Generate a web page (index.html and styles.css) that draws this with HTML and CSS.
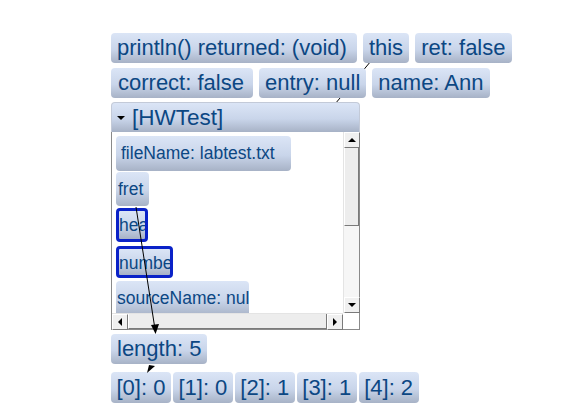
FILE: index.html
```html
<!DOCTYPE html>
<html>
<head>
<meta charset="utf-8">
<link rel="stylesheet" href="styles.css">
</head>
<body>
<div class="stage">
  <svg class="links-under" width="569" height="405" viewBox="0 0 569 405">
    <line x1="371" y1="61" x2="335" y2="104" stroke="#000" stroke-width="1"/>
  </svg>
  <div class="row r1">
    <div class="box b-println">println() returned: (void)</div>
    <div class="box">this</div>
    <div class="box">ret: false</div>
  </div>
  <div class="row r2">
    <div class="box b-correct">correct: false</div>
    <div class="box">entry: null</div>
    <div class="box">name: Ann</div>
  </div>
  <div class="frame">
    <div class="frame-head"><span class="tri"></span>[HWTest]</div>
    <div class="frame-body">
      <div class="content">
        <div class="item w-file">fileName: labtest.txt</div>
        <div class="item w-fret">fret</div>
        <div class="item sel w-hea">hea</div>
        <div class="item sel w-num">numbe</div>
        <div class="item w-src">sourceName: nul</div>
      </div>
      <div class="vscroll">
        <div class="btn up"><span class="arr-up"></span></div>
        <div class="thumb-v"></div>
        <div class="track"></div>
        <div class="btn down"><span class="arr-down"></span></div>
      </div>
      <div class="hscroll">
        <div class="btn left"><span class="arr-left"></span></div>
        <div class="thumb-h"></div>
        <div class="btn right"><span class="arr-right"></span></div>
      </div>
      <div class="corner"></div>
    </div>
  </div>
  <div class="row r-len">
    <div class="box">length: 5</div>
  </div>
  <div class="row r-arr">
    <div class="box">[0]: 0</div>
    <div class="box">[1]: 0</div>
    <div class="box">[2]: 1</div>
    <div class="box">[3]: 1</div>
    <div class="box">[4]: 2</div>
  </div>
  <svg class="links-over" width="569" height="405" viewBox="0 0 569 405">
    <line x1="136" y1="207" x2="154.5" y2="326" stroke="#000" stroke-width="1"/>
    <polygon points="155.6,334 151,325 159,324" fill="#000"/>
    <polygon points="147,373 149,365 155,366" fill="#000"/>
  </svg>
</div>
</body>
</html>
```
FILE: styles.css
```css
html, body {
  margin: 0;
  padding: 0;
  background: #ffffff;
}
.stage {
  position: relative;
  width: 569px;
  height: 405px;
  overflow: hidden;
  padding: 33px 0 0 111px;
  box-sizing: border-box;
  font-family: "Liberation Sans", Arial, sans-serif;
  color: #0c4783;
}
.links-under {
  position: absolute;
  left: 0;
  top: 0;
  z-index: 0;
}
.links-over {
  position: absolute;
  left: 0;
  top: 0;
  z-index: 5;
}
.row {
  position: relative;
  z-index: 1;
  display: flex;
}
.r1 { gap: 6px; }
.r2 { gap: 6px; margin-top: 5px; }
.r-len { margin-top: 4px; }
.r-arr { gap: 2px; margin-top: 8px; }
.box {
  height: 30px;
  line-height: 30px;
  padding: 0 6px;
  font-size: 22px;
  border-radius: 4px;
  background: linear-gradient(#dbe5f6, #c9d5ea 55%, #a7b2c6);
  white-space: nowrap;
}
.b-println { padding-right: 10px; }
.b-correct { padding: 0 9px 0 7px; }
.r-arr .box { height: 31px; line-height: 31px; padding: 0 5.5px; }
.frame {
  position: relative;
  z-index: 1;
  width: 249px;
  margin-top: 4px;
}
.frame-head {
  height: 29px;
  line-height: 29px;
  font-size: 22.5px;
  border-radius: 4px 4px 0 0;
  border: 1px solid #c3cad8;
  border-bottom: none;
  background: linear-gradient(#dbe5f6, #c9d5ea 55%, #a7b2c6);
  display: flex;
  align-items: center;
  padding-left: 5px;
}
.tri {
  width: 0;
  height: 0;
  border-left: 4px solid transparent;
  border-right: 4px solid transparent;
  border-top: 4px solid #000;
  margin-right: 7px;
  margin-top: 1px;
}
.frame-body {
  height: 197px;
  border: 1px solid #8a8a8a;
  border-top: none;
  background: #ffffff;
  display: grid;
  grid-template-columns: 1fr 16px;
  grid-template-rows: 1fr 16px;
}
.content {
  overflow: hidden;
  padding: 4px 0 0 4px;
  display: flex;
  flex-direction: column;
  align-items: flex-start;
}
.item {
  font-size: 17.5px;
  height: 35px;
  line-height: 35px;
  border-radius: 4px;
  background: linear-gradient(#dbe5f6, #c9d5ea 55%, #a7b2c6);
  white-space: nowrap;
  overflow: hidden;
  box-sizing: border-box;
  padding-left: 5px;
  flex-shrink: 0;
}
.w-file { width: 175px; }
.w-fret { width: 33px; height: 34px; line-height: 34px; margin-top: 1px; padding-left: 2px; }
.w-hea { width: 32px; height: 34px; margin-top: 2px; }
.w-num { width: 57px; height: 32px; margin-top: 4px; }
.w-src { width: 133px; margin-top: 3px; padding-left: 1px; }
.item.sel {
  border: 3px solid #0a22c8;
  padding-left: 0;
  line-height: 28px;
}
.vscroll {
  background: #f6f6f6;
  display: flex;
  flex-direction: column;
  border-left: 1px solid #e4e4e4;
}
.btn {
  width: 16px;
  height: 16px;
  box-sizing: border-box;
  background: #f0f0f0;
  border-right: 1px solid #7a7a7a;
  border-bottom: 1px solid #7a7a7a;
  border-left: 1px solid #ffffff;
  border-top: 1px solid #ffffff;
  display: flex;
  align-items: center;
  justify-content: center;
  flex-shrink: 0;
}
.thumb-v {
  height: 78px;
  box-sizing: border-box;
  background: #ededed;
  border-right: 1px solid #7a7a7a;
  border-bottom: 1px solid #7a7a7a;
  border-left: 1px solid #ffffff;
}
.track { flex: 1; background: #f6f6f6; }
.hscroll {
  display: flex;
  background: #f6f6f6;
  border-top: 1px solid #e4e4e4;
}
.thumb-h {
  flex: 1;
  box-sizing: border-box;
  background: #ededed;
  border-right: 1px solid #7a7a7a;
  border-bottom: 1px solid #7a7a7a;
  border-left: 1px solid #ffffff;
}
.corner { background: #ffffff; }
.arr-up { border-left: 4px solid transparent; border-right: 4px solid transparent; border-bottom: 4px solid #000; }
.arr-down { border-left: 4px solid transparent; border-right: 4px solid transparent; border-top: 4px solid #000; }
.arr-left { border-top: 4px solid transparent; border-bottom: 4px solid transparent; border-right: 4px solid #000; }
.arr-right { border-top: 4px solid transparent; border-bottom: 4px solid transparent; border-left: 4px solid #000; }
```
